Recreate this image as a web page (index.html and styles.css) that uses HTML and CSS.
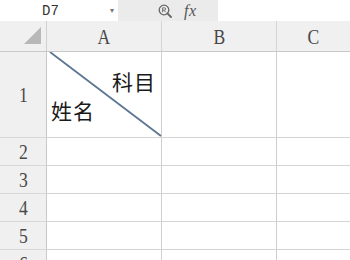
FILE: index.html
```html
<!DOCTYPE html>
<html>
<head>
<meta charset="utf-8">
<link rel="stylesheet" href="styles.css">
</head>
<body>
<div class="bar">
  <div class="namebox"><span class="ref">D7</span><span class="drop">▾</span></div>
  <div class="tools">
    <svg class="zoomicon" width="14" height="14" viewBox="0 0 14 14">
      <circle cx="6" cy="6" r="4.8" fill="none" stroke="#666" stroke-width="1.3"/>
      <path d="M9.4 9.4 L13 13" stroke="#666" stroke-width="1.8" stroke-linecap="round"/>
      <path d="M4.6 8.2 V3.8 H6.4 A1.2 1.2 0 0 1 6.4 6.2 H4.6 M6 6.2 L7.6 8.2" fill="none" stroke="#666" stroke-width="0.9"/>
    </svg>
    <span class="fx">fx</span>
  </div>
  <div class="formula"></div>
</div>
<div class="sheet">
  <div class="corner"><span class="tri"></span></div>
  <div class="colhead"><span class="hl">A</span></div>
  <div class="colhead"><span class="hl">B</span></div>
  <div class="colhead last"><span class="hl">C</span></div>

  <div class="rowhead"><span class="hl">1</span></div>
  <div class="cell diag">
    <svg class="slash" width="115" height="86" viewBox="0 0 115 86" preserveAspectRatio="none">
      <line x1="3" y1="0" x2="114" y2="84" stroke="#5b7592" stroke-width="1.8"/>
    </svg>
    <span class="subj">科目</span>
    <span class="name">姓名</span>
  </div>
  <div class="cell"></div>
  <div class="cell last"></div>

  <div class="rowhead"><span class="hl">2</span></div><div class="cell"></div><div class="cell"></div><div class="cell last"></div>
  <div class="rowhead"><span class="hl">3</span></div><div class="cell"></div><div class="cell"></div><div class="cell last"></div>
  <div class="rowhead"><span class="hl">4</span></div><div class="cell"></div><div class="cell"></div><div class="cell last"></div>
  <div class="rowhead"><span class="hl">5</span></div><div class="cell"></div><div class="cell"></div><div class="cell last"></div>
  <div class="rowhead"><span class="hl">6</span></div><div class="cell"></div><div class="cell"></div><div class="cell last"></div>
</div>
</body>
</html>
```
FILE: styles.css
```css
html, body {
  margin: 0;
  padding: 0;
  background: #fff;
  overflow: hidden;
}
body {
  width: 350px;
  height: 260px;
  font-family: "Liberation Serif", serif;
}
.bar {
  display: flex;
  height: 21px;
  background: #fff;
}
.namebox {
  width: 118px;
  display: flex;
  align-items: center;
}
.ref {
  margin-left: 42px;
  font-family: "Liberation Mono", monospace;
  font-size: 14px;
  color: #333;
}
.drop {
  margin-left: auto;
  margin-right: 4px;
  font-size: 8px;
  color: #777;
  font-family: "DejaVu Sans", sans-serif;
}
.tools {
  width: 100px;
  background: #ebebeb;
  display: flex;
  align-items: center;
  height: 21px;
}
.zoomicon {
  margin-left: 40px;
}
.fx {
  margin-left: 12px;
  font-family: "Liberation Serif", serif;
  font-style: italic;
  font-size: 16px;
  color: #555;
  letter-spacing: 0.5px;
}
.formula {
  flex: 1;
}
.sheet {
  display: grid;
  grid-template-columns: 47px 115px 115px 1fr;
  grid-template-rows: 31px 86px repeat(5, 28px);
  height: 239px;
  overflow: hidden;
}
.corner, .colhead, .rowhead {
  background: #f0f0f0;
  color: #484848;
  box-sizing: border-box;
  display: flex;
  align-items: center;
  justify-content: center;
  font-family: "Liberation Serif", serif;
  font-size: 22px;
}
.hl {
  display: inline-block;
  transform: scaleX(0.8);
}
.corner {
  border-right: 1px solid #d0d0d0;
  border-bottom: 1px solid #c8c8c8;
  position: relative;
}
.tri {
  position: absolute;
  left: 24px;
  top: 6px;
  width: 0;
  height: 0;
  border-left: 17px solid transparent;
  border-bottom: 17px solid #b8b8b8;
}
.colhead {
  border-right: 1px solid #d6d6d6;
  border-bottom: 1px solid #c8c8c8;
  padding-top: 1px;
}
.rowhead {
  border-right: 1px solid #c8c8c8;
  border-bottom: 1px solid #d8d8d8;
}
.cell {
  box-sizing: border-box;
  border-right: 1px solid #cfcfcf;
  border-bottom: 1px solid #d4d4d4;
}
.last {
  border-right: none;
}
.diag {
  position: relative;
}
.slash {
  position: absolute;
  left: 0;
  top: 0;
}
.subj, .name {
  position: absolute;
  font-family: "Noto Sans CJK SC", sans-serif;
  font-size: 21px;
  line-height: 24px;
  color: #1a1a1a;
  letter-spacing: 1px;
}
.subj {
  right: 5px;
  top: 17px;
}
.name {
  left: 4px;
  top: 46px;
}
```
